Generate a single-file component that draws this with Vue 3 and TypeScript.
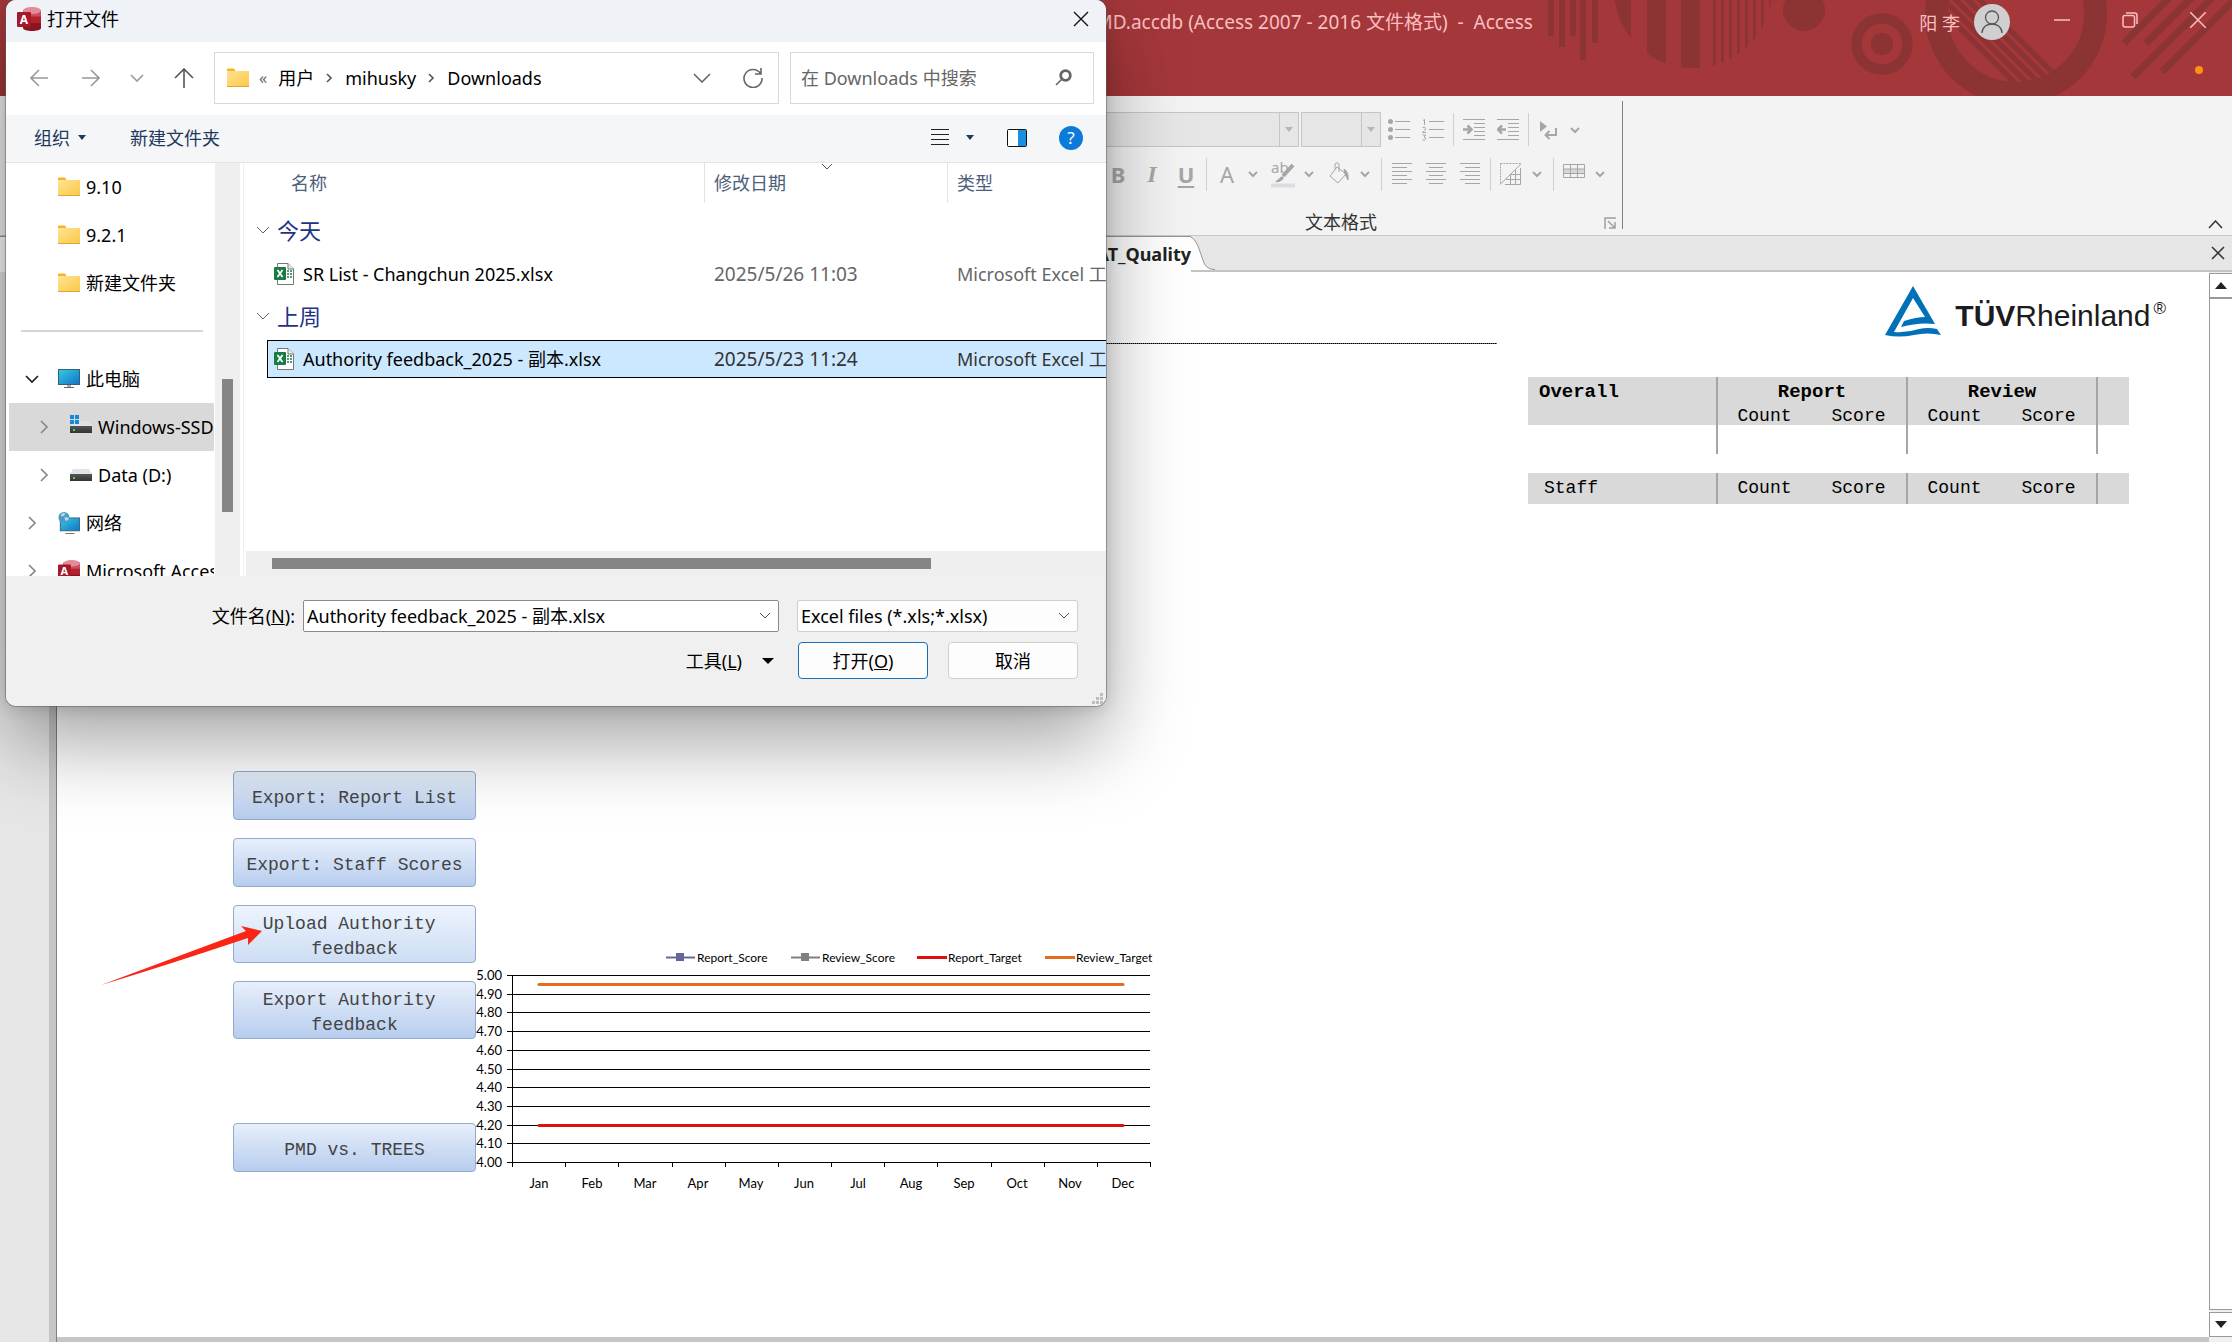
<script setup lang="ts">
interface FileRow { name: string; date: string; type: string; selected: boolean }
interface Group { title: string; rows: FileRow[] }

const groups: Group[] = [
  { title: '今天', rows: [{ name: 'SR List - Changchun 2025.xlsx', date: '2025/5/26 11:03', type: 'Microsoft Excel 工作表', selected: false }] },
  { title: '上周', rows: [{ name: 'Authority feedback_2025 - 副本.xlsx', date: '2025/5/23 11:24', type: 'Microsoft Excel 工作表', selected: true }] },
]

interface TreeItem { label: string; icon: string; arrow: '' | 'right' | 'down'; nested: boolean; active: boolean }
const folders: TreeItem[] = ['9.10', '9.2.1', '新建文件夹'].map((label) => ({ label, icon: 'folder', arrow: '', nested: false, active: false }))
const places: TreeItem[] = [
  { label: '此电脑', icon: 'pc', arrow: 'down', nested: false, active: false },
  { label: 'Windows-SSD (C:)', icon: 'windrive', arrow: 'right', nested: true, active: true },
  { label: 'Data (D:)', icon: 'drive', arrow: 'right', nested: true, active: false },
  { label: '网络', icon: 'network', arrow: 'right', nested: false, active: false },
  { label: 'Microsoft Access', icon: 'access', arrow: 'right', nested: false, active: false },
]

const months = ['Jan', 'Feb', 'Mar', 'Apr', 'May', 'Jun', 'Jul', 'Aug', 'Sep', 'Oct', 'Nov', 'Dec']
const plot = { left: 36, right: 674, top: 31, bottom: 218 }
const step = (plot.right - plot.left) / months.length
const monthX = (i: number) => Math.round(plot.left + step * (i + 0.5))
const tickX = (i: number) => Math.round(plot.left + step * i) + 0.5
const valueY = (v: number) => Math.round(plot.bottom - ((v - 4) / 1) * (plot.bottom - plot.top))
const levels = Array.from({ length: 11 }, (_, i) => 5 - i / 10)
const legend = [
  { label: 'Report_Score', x: 190, color: '#666699', marker: true },
  { label: 'Review_Score', x: 315, color: '#808080', marker: true },
  { label: 'Report_Target', x: 441, color: '#dd0f12', marker: false },
  { label: 'Review_Target', x: 569, color: '#e46c1e', marker: false },
]
const series = [
  { value: 4.95, color: '#e46c1e' },
  { value: 4.2, color: '#dd0f12' },
]
const stripes = [1713, 1721, 1729, 1737, 1745, 1753, 1761, 1769]
const alignments = [
  { name: '左对齐', x: [0, 0, 0, 0, 0, 0] },
  { name: '居中', x: [0, 3, 0, 3, 0, 3] },
  { name: '右对齐', x: [0, 5, 0, 5, 0, 5] },
]
</script>

<template>
  <div class="app">
    <header class="titlebar">
      <svg class="pattern" width="692" height="96" viewBox="1540 0 692 96" aria-hidden="true">
        <defs>
          <clipPath id="disc"><circle cx="1693" cy="-11" r="79" /></clipPath>
          <clipPath id="hole"><circle cx="2016" cy="14" r="70" /></clipPath>
        </defs>
        <g fill="#8c3334">
          <path d="M1548 0h6v36h-6zM1559 0h6v47h-6zM1570 0h6v36h-6zM1580 0h6v60h-6zM1592 0h6v43h-6z" />
          <g clip-path="url(#disc)">
            <path d="M1612 0h19v96h-19zM1647 0h19v96h-19zM1681 0h19v96h-19z" />
            <rect v-for="x in stripes" :key="x" :x="x" y="0" width="3" height="96" />
          </g>
          <circle cx="1804" cy="10" r="21" />
          <circle cx="1882" cy="44" r="11" />
        </g>
        <circle cx="1882" cy="44" r="25.500" fill="none" stroke="#8c3334" stroke-width="10.500" />
        <circle cx="2016" cy="14" r="79.500" fill="none" stroke="#8c3334" stroke-width="23" />
        <g clip-path="url(#hole)" stroke="#8c3334" stroke-width="5">
          <path d="M1930 -2L2020 88M1942 -2L2032 88M1954 -2L2044 88M1966 -2L2056 88M1978 -2L2068 88" />
        </g>
        <path d="M2124 43L2171 -4M2146 43L2193 -4M2133 77L2216 -6M2162 72L2240 -6" stroke="#8c3334" stroke-width="7" />
      </svg>
      <div class="caption">PMD.accdb (Access 2007 - 2016 文件格式)&nbsp; -&nbsp; Access</div>
      <div class="account">
        <span>阳 李</span>
        <svg width="36" height="36" viewBox="0 0 36 36"><circle cx="18" cy="18" r="18" fill="#d0cfcf" /><g fill="none" stroke="#555" stroke-width="1.300"><circle cx="18" cy="13.500" r="6.500" /><path d="M8 29c0-12 20-12 20 0" /></g></svg>
      </div>
      <button class="win" aria-label="最小化"><svg width="16" height="16" viewBox="0 0 16 16"><path d="M0 8h16" /></svg></button>
      <button class="win" aria-label="还原"><svg width="16" height="16" viewBox="0 0 16 16"><rect x="1" y="3.500" width="11.500" height="11.500" rx="2" /><path d="M4 1h8.500q2.500 0 2.500 2.500V12" /></svg></button>
      <button class="win" aria-label="关闭"><svg width="16" height="16" viewBox="0 0 16 16"><path d="M0 0l16 16M16 0L0 16" /></svg></button>
      <i class="notice"></i>
    </header>

    <section class="ribbon">
      <div class="group">
        <div class="tools first">
          <div class="combo wide"><select disabled aria-label="字体"><option></option></select><span><svg width="8" height="5"><path d="M0 0h8L4 5z" fill="#b5b5b5" /></svg></span></div>
          <div class="combo"><select disabled aria-label="字号"><option></option></select><span><svg width="8" height="5"><path d="M0 0h8L4 5z" fill="#b5b5b5" /></svg></span></div>
          <button class="tool" aria-label="项目符号"><svg width="22" height="22" viewBox="0 0 22 22"><g fill="#a6a6a6" stroke="none"><circle cx="2.500" cy="2.500" r="2.500" /><circle cx="2.500" cy="10.500" r="2.500" /><circle cx="2.500" cy="18.500" r="2.500" /></g><path d="M7 2.500h15M7 10.500h15M7 18.500h15" /></svg></button>
          <button class="tool" aria-label="编号"><svg width="22" height="22" viewBox="0 0 22 22"><path d="M1 1.500L2.500 .5V6M.5 8.500q3-1 3 .8Q3.500 11 .5 13.500h3.500M.5 16h3.200l-1.700 2q2 .2 1.700 2-.8 1.800-3.200 1M7 2.500h15M7 10.500h15M7 18.500h15" /></svg></button>
          <i class="sep"></i>
          <button class="tool" aria-label="增加缩进"><svg width="22" height="22" viewBox="0 0 22 22"><path d="M0 .5h22M11 4.500h11M11 8.500h11M11 12.500h11M11 16.500h11M0 20.500h22" /><path d="M0 10.500h8M4.500 6.500l4 4-4 4" stroke-width="2.500" /></svg></button>
          <button class="tool" aria-label="减少缩进"><svg width="22" height="22" viewBox="0 0 22 22"><path d="M0 .5h22M11 4.500h11M11 8.500h11M11 12.500h11M11 16.500h11M0 20.500h22" /><path d="M1 10.500h8M5 6.500l-4 4 4 4" stroke-width="2.500" /></svg></button>
          <i class="sep"></i>
          <button class="tool split" aria-label="文字方向"><svg width="34" height="22" viewBox="0 0 34 22"><path d="M8 2l7 5.500L8 13z" fill="#a6a6a6" stroke="none" /><path d="M24 9v7H14M17.500 12L13.500 16l4 4" stroke-width="2" /></svg><svg class="chev" width="18" height="10"><path d="M5 3l4 4 4-4" /></svg></button>
        </div>
        <div class="tools second">
          <button class="tool letter"><b>B</b></button>
          <button class="tool letter"><b class="it">I</b></button>
          <button class="tool letter"><b class="un">U</b></button>
          <i class="sep"></i>
          <button class="tool split letter"><span>A</span><svg class="chev" width="18" height="10"><path d="M5 3l4 4 4-4" /></svg></button>
          <button class="tool split" aria-label="突出显示"><svg width="34" height="28" viewBox="0 0 34 28"><text x="5" y="13" font-size="15" fill="#a6a6a6" stroke="none">ab</text><path d="M27 5L17 16" stroke-width="4" /><path d="M9 22l7-6 2 2q-3 5-9 4z" fill="#a6a6a6" stroke="none" /><path d="M5 25.500h24" stroke="#dfdbe2" stroke-width="4" /></svg><svg class="chev" width="18" height="10"><path d="M5 3l4 4 4-4" /></svg></button>
          <button class="tool split" aria-label="填充"><svg width="34" height="26" viewBox="0 0 34 26"><path d="M15 6l9 7-8 9-8-7zM13 8V3q2.500-3 4 0v8" /><path d="M22 8q5 3 4 11l-3-6z" fill="#a6a6a6" /></svg><svg class="chev" width="18" height="10"><path d="M5 3l4 4 4-4" /></svg></button>
          <i class="sep"></i>
          <button v-for="a in alignments" :key="a.name" class="tool" :aria-label="a.name">
            <svg width="20" height="22" viewBox="0 0 20 22"><path v-for="(x, i) in a.x" :key="i" :d="`M${x} ${i * 4 + 0.5}h${i % 2 ? (a.name === '居中' ? 14 : 15) : 20}`" /></svg>
          </button>
          <i class="sep"></i>
          <button class="tool split" aria-label="网格线"><svg width="34" height="22" viewBox="0 0 34 22"><path d="M6.500 .5h21M6.500 .5v21" stroke-dasharray="2 1" /><path d="M6 21.500L27 1M26.500 5v16.500H11M21.500 6v15M16.500 11v10M16 11.500h11M12 16.500h15" /></svg><svg class="chev" width="18" height="10"><path d="M5 3l4 4 4-4" /></svg></button>
          <i class="sep"></i>
          <button class="tool split" aria-label="可选行颜色"><svg width="34" height="22" viewBox="0 0 34 22"><path d="M6 6h22v4H6z" fill="#dcd4dc" stroke="none" /><path d="M6.500 1.500h21v13h-21zM6 6h22M6 10.500h22M13.500 1v13M20.500 1v13" /></svg><svg class="chev" width="18" height="10"><path d="M5 3l4 4 4-4" /></svg></button>
        </div>
        <div class="group-name">
          <span>文本格式</span>
          <button aria-label="更多格式选项"><svg width="12" height="12" viewBox="0 0 12 12"><path d="M1 12V1h11M4 4l6 6M11 5v6H5" fill="none" stroke="#a0a0a0" stroke-width="1.500" /></svg></button>
        </div>
      </div>
      <button class="collapse" aria-label="折叠功能区"><svg width="15" height="9" viewBox="0 0 15 9"><path d="M1 8l6.500-7L14 8" fill="none" stroke="#333" stroke-width="1.500" /></svg></button>
    </section>

    <nav class="tabs">
      <a class="tab" href="#quality">AT_Quality</a>
      <svg class="slope" width="24" height="34" viewBox="0 0 24 34"><path d="M0 34V1Q4 3 7 10L13 27Q16 33.500 23 33.500V34z" fill="#fff" /><path d="M0 1Q4 3 7 10L13 27Q16 33.500 24 33.500" fill="none" stroke="#969696" /></svg>
      <button aria-label="关闭选项卡"><svg width="14" height="14" viewBox="0 0 14 14"><path d="M1 1l12 12M13 1L1 13" fill="none" stroke="#333" stroke-width="1.500" /></svg></button>
    </nav>

    <div class="workspace">
      <aside class="navpane"></aside>
      <main class="form">
        <div class="form-left">
          <hr />
          <div class="lower">
            <div class="actions">
              <button class="act one">Export: Report List</button>
              <button class="act one">Export: Staff Scores</button>
              <button class="act light">Upload Authority&nbsp;<br />feedback</button>
              <button class="act">Export Authority&nbsp;<br />feedback</button>
              <button class="act one last">PMD vs. TREES</button>
            </div>
            <svg class="chart" width="684" height="254" viewBox="0 0 684 254" role="img" aria-label="Scores">
              <g v-for="l in legend" :key="l.label">
                <path :d="`M${l.x} 13.5h${l.marker ? 29 : 30}`" :stroke="l.color" :stroke-width="l.marker ? 2 : 3" />
                <rect v-if="l.marker" :x="l.x + 10" y="9" width="8" height="8" :fill="l.color" />
                <text :x="l.x + 31" y="18" class="legend">{{ l.label }}</text>
              </g>
              <g stroke="#000">
                <path v-for="v in levels" :key="v" :d="`M${plot.left - 5} ${valueY(v) + 0.5}H${plot.right}`" />
                <path :d="`M${plot.left + 0.5} ${plot.top}V${plot.bottom}`" />
                <path v-for="i in 13" :key="i" :d="`M${tickX(i - 1)} ${plot.bottom}v5`" />
              </g>
              <text v-for="v in levels" :key="v" x="26" :y="valueY(v) + 5" text-anchor="end">{{ v.toFixed(2) }}</text>
              <text v-for="(m, i) in months" :key="m" :x="monthX(i)" y="244" text-anchor="middle">{{ m }}</text>
              <path v-for="s in series" :key="s.value" :d="`M${monthX(0)} ${valueY(s.value) + 0.5}H${monthX(11)}`" :stroke="s.color" stroke-width="3" stroke-linecap="round" />
            </svg>
          </div>
        </div>
        <div class="form-right">
          <div class="logo">
            <svg width="56" height="51" viewBox="0 0 56 51"><path fill="#0071b9" fill-rule="evenodd" d="M28 0L50 38Q34 36 16 41L19 35Q32 31 40 31L28 12 9 46Q22 47 34 43 43 41 52 43L56 49Q42 46 29 49 14 52 0 49z" /></svg>
            <span><b>TÜV</b>Rheinland</span><sup>®</sup>
          </div>
          <table class="score overall">
            <colgroup><col class="c-name" /><col class="c-val" span="4" /><col /></colgroup>
            <thead>
              <tr><th class="first">Overall</th><th colspan="2" class="bar">Report</th><th colspan="2" class="bar">Review</th><th class="bar"></th></tr>
              <tr class="sub"><td></td><td class="bar">Count</td><td>Score</td><td class="bar">Count</td><td>Score</td><td class="bar"></td></tr>
            </thead>
            <tbody><tr class="blank"><td></td><td class="bar"></td><td></td><td class="bar"></td><td></td><td class="bar"></td></tr></tbody>
          </table>
          <table class="score staff">
            <colgroup><col class="c-name" /><col class="c-val" span="4" /><col /></colgroup>
            <thead><tr><td class="first">Staff</td><td class="bar">Count</td><td>Score</td><td class="bar">Count</td><td>Score</td><td class="bar"></td></tr></thead>
          </table>
        </div>
        <svg class="pointer" width="162" height="62" viewBox="0 0 162 62" aria-hidden="true"><path d="M0 60L145 6 140 1 161 6 147 20V13Q60 42 0 60z" fill="#fb2516" /></svg>
      </main>
      <div class="vscroll">
        <button aria-label="向上滚动"><svg width="12" height="7"><path d="M0 7h12L6 0z" fill="#222" /></svg></button>
        <div class="track"></div>
        <button class="down" aria-label="向下滚动"><svg width="12" height="7"><path d="M0 0h12L6 7z" fill="#222" /></svg></button>
      </div>
    </div>

    <svg class="defs" width="0" height="0" aria-hidden="true">
      <defs>
        <linearGradient id="gf" x1="0" y1="0" x2="1" y2="1"><stop offset="0" stop-color="#ffe396" /><stop offset="1" stop-color="#fcc846" /></linearGradient>
        <linearGradient id="gs" x1="0" y1="0" x2="1" y2="1"><stop offset="0" stop-color="#36cbe0" /><stop offset="1" stop-color="#1173c8" /></linearGradient>
        <linearGradient id="gd" x1="0" y1="0" x2="0" y2="1"><stop offset="0" stop-color="#555" /><stop offset="1" stop-color="#333" /></linearGradient>
      </defs>
      <symbol id="i-folder" viewBox="0 0 22 24"><path d="M0 3.500h7l2 2.500h-9z" fill="#eaa81c" /><path d="M0 3q0-.5.500-.5H7l1.500 2.500H22V19H0z" fill="#f5b520" /><path d="M0 5h22v15H0z" fill="url(#gf)" /><path d="M0 20.500h22" stroke="#dba53a" /></symbol>
      <symbol id="i-pc" viewBox="0 0 22 24"><rect x=".5" y="2.500" width="21" height="15" fill="url(#gs)" stroke="#35607c" /><path d="M9 18h4v2H9z" fill="#aaa" /><path d="M6 20.500h10" stroke="#666" /></symbol>
      <symbol id="i-drive" viewBox="0 0 22 24"><path d="M3 6h16l3 5H0z" fill="#e2e2e6" /><path d="M0 11h22v7H0z" fill="url(#gd)" /><path d="M3 14h2v2H3z" fill="#4fd44f" /></symbol>
      <symbol id="i-windrive" viewBox="0 0 22 24"><path d="M9 6h10l3 5H0z" fill="#e2e2e6" /><path d="M0 11h22v7H0z" fill="url(#gd)" /><path d="M3 14h2v2H3z" fill="#4fd44f" /><path d="M0 0h4v4H0zM5 0h4v4H5zM0 5h4v4H0zM5 5h4v4H5z" fill="#1588d8" /></symbol>
      <symbol id="i-network" viewBox="0 0 24 24"><rect x="2.500" y="6.500" width="21" height="14" fill="url(#gs)" stroke="#35607c" /><path d="M8 23.500h10" stroke="#666" /><circle cx="6.500" cy="6" r="6" fill="#4a9cc4" /><path d="M3 3q3-3 5-1-1 3-4 3zM7 6q4-1 5 1-2 4-4 2z" fill="#b9dcea" /></symbol>
      <symbol id="i-access" viewBox="0 0 24 24"><path d="M6 3v18c0 4 18 4 18 0V3z" fill="#8a1420" /><path d="M6 3v13h18V3z" fill="#b5202f" /><path d="M6 3v6.500h18V3z" fill="#c94f5f" /><ellipse cx="15" cy="3.500" rx="9" ry="3.500" fill="#e38a98" /><rect y="5" width="14" height="15" rx="1" fill="#a5182a" /><text x="7" y="16.500" font-size="12" font-weight="700" fill="#fff" text-anchor="middle">A</text></symbol>
      <symbol id="i-excel" viewBox="0 0 20 22"><path d="M3.500 .5H14L19.500 6v15.500h-16z" fill="#fff" stroke="#777" /><path d="M14 .5V6h5.500" fill="#eee" stroke="#777" /><path d="M13 8h2M16 8h2M13 11h2M16 11h2M13 14h2M16 14h2" stroke="#1d7f49" stroke-width="1.500" /><rect y="4" width="12" height="13" rx="1" fill="#187c44" /><path d="M3.500 7l5 7M8.500 7l-5 7" stroke="#fff" stroke-width="1.800" /></symbol>
    </svg>

    <section class="dialog" role="dialog" aria-label="打开文件">
      <div class="d-title">
        <svg width="24" height="24"><use href="#i-access" /></svg>
        <span>打开文件</span>
        <button aria-label="关闭"><svg width="16" height="16" viewBox="0 0 16 16"><path d="M1 1l14 14M15 1L1 15" fill="none" stroke="#111" stroke-width="1.400" /></svg></button>
      </div>
      <div class="d-nav">
        <button class="n1" aria-label="后退"><svg width="18" height="18" viewBox="0 0 18 18"><path d="M18 9H1M9 1L1 9l8 8" stroke="#999" /></svg></button>
        <button class="n1" aria-label="前进"><svg width="18" height="18" viewBox="0 0 18 18"><path d="M0 9h17M9 1l8 8-8 8" stroke="#999" /></svg></button>
        <button class="n2" aria-label="最近位置"><svg width="14" height="8" viewBox="0 0 14 8"><path d="M1 1l6 6 6-6" stroke="#999" /></svg></button>
        <button class="n3" aria-label="上移"><svg width="20" height="20" viewBox="0 0 20 20"><path d="M10 20V1M1 10l9-9 9 9" stroke="#555" /></svg></button>
        <div class="address">
          <svg width="22" height="24"><use href="#i-folder" /></svg>
          <span class="dim">«</span><a href="#users">用户</a>
          <svg class="crumb" width="7" height="10"><path d="M1 1l4 4-4 4" /></svg><a href="#mihusky">mihusky</a>
          <svg class="crumb" width="7" height="10"><path d="M1 1l4 4-4 4" /></svg><a href="#downloads">Downloads</a>
          <button class="drop" aria-label="展开地址"><svg width="18" height="10" viewBox="0 0 18 10"><path d="M1 1l8 8 8-8" stroke="#666" /></svg></button>
          <button aria-label="刷新"><svg width="20" height="20" viewBox="0 0 20 20"><path d="M17.500 5.500A9 9 0 1 0 19 10M18 0v6h-6" stroke="#666" /></svg></button>
        </div>
        <div class="search">
          <input type="text" placeholder="在 Downloads 中搜索" aria-label="搜索" />
          <svg width="17" height="17" viewBox="0 0 17 17"><circle cx="10.500" cy="6.500" r="4.800" fill="none" stroke="#666" stroke-width="2.800" /><path d="M7 10l-6 6" stroke="#666" stroke-width="2.800" /></svg>
        </div>
      </div>
      <div class="d-tools">
        <button>组织<svg width="8" height="5"><path d="M0 0h8L4 5z" fill="#1e395b" /></svg></button>
        <button class="new">新建文件夹</button>
        <button class="view" aria-label="视图"><svg width="18" height="17" viewBox="0 0 18 17"><path d="M0 .5h18M0 5.500h18M0 10.500h18M0 15.500h18" stroke="#222" /></svg><svg width="8" height="5"><path d="M0 0h8L4 5z" fill="#1e395b" /></svg></button>
        <button class="pane" aria-label="预览窗格"><svg width="20" height="18" viewBox="0 0 20 18"><path d="M1 1h18v16H1z" fill="#fff" /><path d="M11 1h8v16h-8z" fill="#1a8fe0" /><rect x=".5" y=".5" width="19" height="17" rx="1" fill="none" stroke="#111" /></svg></button>
        <button class="help" aria-label="帮助">?</button>
      </div>
      <div class="d-body">
        <div class="tree">
          <a v-for="t in folders" :key="t.label" class="node" href="#folder"><i class="arrow"></i><svg width="22" height="24"><use :href="`#i-${t.icon}`" /></svg><span>{{ t.label }}</span></a>
          <div class="rule"></div>
          <a v-for="t in places" :key="t.label" class="node" :class="{ nested: t.nested, active: t.active }" href="#place">
            <i class="arrow">
              <svg v-if="t.arrow === 'down'" width="14" height="8" viewBox="0 0 14 8"><path d="M1 1l6 6 6-6" stroke="#222" /></svg>
              <svg v-else width="8" height="14" viewBox="0 0 8 14"><path d="M1 1l6 6-6 6" stroke="#888" /></svg>
            </i>
            <svg width="22" height="24"><use :href="`#i-${t.icon}`" /></svg><span>{{ t.label }}</span>
          </a>
        </div>
        <div class="tree-scroll"><i></i></div>
        <div class="files">
          <table>
            <colgroup><col class="f0" /><col class="f1" /><col class="f2" /><col /></colgroup>
            <thead><tr><th></th><th class="name">名称</th><th class="line"><svg class="sort" width="12" height="7" viewBox="0 0 12 7"><path d="M1 1l5 5 5-5" fill="none" stroke="#555" /></svg>修改日期</th><th class="line">类型</th></tr></thead>
            <tbody v-for="g in groups" :key="g.title">
              <tr class="grp"><td colspan="4"><svg width="14" height="8" viewBox="0 0 14 8"><path d="M1 1l6 6 6-6" fill="none" stroke="#666" /></svg>{{ g.title }}</td></tr>
              <tr v-for="r in g.rows" :key="r.name" class="file" :class="{ selected: r.selected }">
                <td class="pad"></td>
                <td class="fname"><svg width="20" height="22"><use href="#i-excel" /></svg>{{ r.name }}</td><td class="date">{{ r.date }}</td><td>{{ r.type }}</td>
              </tr>
            </tbody>
          </table>
          <div class="files-scroll"><i></i></div>
        </div>
      </div>
      <div class="d-foot">
        <div class="line1">
          <label for="fname">文件名(<u>N</u>):</label>
          <div class="box dark"><input id="fname" type="text" value="Authority feedback_2025 - 副本.xlsx" /><svg width="12" height="8" viewBox="0 0 12 8"><path d="M1 1l5 5 5-5" fill="none" stroke="#555" /></svg></div>
          <div class="box filter"><select aria-label="文件类型"><option>Excel files (*.xls;*.xlsx)</option></select><svg width="12" height="8" viewBox="0 0 12 8"><path d="M1 1l5 5 5-5" fill="none" stroke="#555" /></svg></div>
        </div>
        <div class="line2">
          <button class="tl"><span>工具(<u>L</u>)</span><svg width="12" height="6"><path d="M0 0h12L6 6z" /></svg></button>
          <button class="btn primary"><span>打开(<u>O</u>)</span></button>
          <button class="btn">取消</button>
        </div>
        <svg class="grip" width="11" height="11" viewBox="0 0 11 11"><path d="M8 0h3v3H8zM8 4h3v3H8zM4 4h3v3H4zM8 8h3v3H8zM4 8h3v3H4zM0 8h3v3H0z" fill="#bdbdbd" /></svg>
      </div>
    </section>
  </div>
</template>

<style>
body { margin: 0; }
</style>

<style scoped>
.app { position: relative; display: flex; flex-direction: column; min-height: 100vh; overflow: hidden; background: #fff; color: #000; font: 18px/24px "Noto Sans", "Noto Sans CJK SC", sans-serif; }
.app * { box-sizing: border-box; }
button { padding: 0; border: 0; background: none; color: inherit; font: inherit; }
input, select { min-width: 0; padding: 0; border: 0; outline: 0; background: none; color: inherit; font: inherit; appearance: none; opacity: 1; }
a { color: inherit; text-decoration: none; }
svg { flex: none; display: block; }
.defs { position: absolute; }

.titlebar { position: relative; display: flex; align-items: flex-start; height: 96px; padding-left: 1084px; background: #a4373a; color: #fbbfc1; }
.pattern { position: absolute; top: 0; right: 0; }
.caption, .account, .win { position: relative; }
.caption { flex: 1; padding-top: 10px; font-size: 19px; white-space: pre; }
.account { display: flex; gap: 14px; margin: 4px 18px 0 0; }
.account span { padding-top: 7px; white-space: pre; }
.win { width: 68px; height: 40px; display: grid; place-items: center; }
.win path, .win rect { fill: none; stroke: #fbbfc1; stroke-width: 1.500; }
.notice { position: absolute; right: 29px; top: 66px; width: 8px; height: 8px; border-radius: 50%; background: #ff9110; }

.ribbon { display: flex; align-items: flex-end; justify-content: space-between; height: 140px; padding: 5px 9px 6px 0; background: #f3f3f3; border-bottom: 1px solid #c8c8c8; }
.group { height: 128px; width: 1623px; padding-left: 1060px; border-right: 1px solid #808080; }
.tools { display: flex; align-items: center; }
.first { height: 35px; margin-top: 11px; }
.second { height: 34px; margin: 10px 0 0 41px; }
.combo { display: flex; width: 80px; height: 35px; margin-right: 1px; border: 1px solid #c6c6c6; background: #e6e6e6; }
.combo.wide { width: 239px; margin-right: 2px; }
.combo select { flex: 1; }
.combo span { display: grid; place-items: center; width: 19px; border-left: 1px solid #c6c6c6; }
.tool { display: grid; place-items: center; width: 34px; height: 34px; color: #a6a6a6; }
.tool.split { display: flex; align-items: center; width: 56px; }
.tool svg { fill: none; stroke: #a6a6a6; }
.tool .chev { stroke-width: 2; }
.letter { font-size: 22px; }
.letter span { width: 34px; text-align: center; }
.it { font-family: "Liberation Serif", serif; font-style: italic; font-size: 24px; }
.un { text-decoration: underline; text-underline-offset: 3px; }
.sep { width: 1px; height: 33px; margin: 0 3px; background: #cfcfcf; }
.group-name { display: flex; align-items: center; justify-content: center; position: relative; height: 24px; margin-top: 19px; color: #333; }
.group-name button { position: absolute; right: 6px; bottom: 5px; }

.tabs { display: flex; align-items: center; height: 36px; background: #e6e6e6; border-bottom: 2px solid #c3c3c3; padding-right: 7px; }
.tab { height: 36px; width: 1191px; padding-top: 5px; margin-bottom: -2px; border-top: 1px solid #969696; background: #fff; color: #222; font-weight: 700; text-align: right; }
.slope { margin-right: auto; }

.workspace { flex: 1; display: flex; }
.navpane { width: 57px; background: #e6e6e6; border-right: 1px solid #808080; box-shadow: inset -7px 0 #c6c6c6; }
.form { position: relative; flex: 1; display: flex; border-bottom: 5px solid #c6c6c8; }
.form-left { flex: 1; }
hr { height: 1px; width: calc(100% - 31px); margin: 71px 0 0; border: 0; background: repeating-linear-gradient(90deg, #000 0 1px, #666 1px 2px); }
.lower { display: flex; margin: 427px 0 0 176px; }
.actions { display: flex; flex-direction: column; gap: 18px; width: 243px; }
.act { height: 58px; padding-top: 5px; border: 1px solid #93aacb; border-radius: 4px; background: linear-gradient(#e7effb, #b7cdee); color: #444; font: 18px/25px "Liberation Mono", monospace; }
.act.one { height: 49px; }
.act.light { background: linear-gradient(#edf4fd, #cdddf4); }
.act.last { margin-top: 66px; }
.chart { margin-top: 173px; font: 13px Lato, sans-serif; }
.legend { font-size: 12px; }

.form-right { width: 681px; }
.logo { display: flex; align-items: center; justify-content: flex-end; height: 51px; margin: 14px 43px 40px 0; color: #1b1b20; font: 30px/34px "Liberation Sans", Arial, sans-serif; }
.logo span { margin: 8px 3px 0 14px; }
.logo sup { font-size: 17px; line-height: 20px; align-self: flex-start; margin-top: 13px; }
.score { width: 601px; table-layout: fixed; border-spacing: 0; font: 18px/23px "Liberation Mono", monospace; }
.score td, .score th { padding: 0; text-align: center; }
.score thead { background: #d9d9d9; }
.score th { height: 28px; padding-top: 2px; font-size: 19px; }
.score .sub td { height: 20px; padding-top: 2px; line-height: 18px; }
.c-name { width: 188px; }
.c-val { width: 95px; }
.score .bar { border-left: 2px solid #a6a6a6; }
.score .first { padding-left: 11px; text-align: left; }
.blank td { height: 29px; }
.staff { margin-top: 19px; }
.staff td { height: 31px; }
.score.staff .first { padding-left: 16px; }
.pointer { position: absolute; left: 44px; top: 653px; }

.vscroll { display: flex; flex-direction: column; width: 23px; padding-top: 1px; padding-bottom: 5px; background: #f0f0f0; }
.vscroll button { display: grid; place-items: center; height: 25px; border: 1px solid #999; border-right: 0; background: #fff; }
.vscroll .track { flex: 1; border: 1px solid #999; border-right: 0; background: #fff; }
.vscroll .down { margin-top: 2px; }

.dialog { position: absolute; left: 6px; top: 0; width: 1100px; overflow: hidden; border-radius: 10px; background: #fff; box-shadow: 0 0 0 1px rgba(90, 90, 90, 0.5), 0 36px 80px rgba(0, 0, 0, 0.36), 0 2px 16px rgba(0, 0, 0, 0.16); }
.d-title { display: flex; align-items: center; gap: 6px; height: 42px; padding: 0 17px 4px 11px; background: #eff3f8; }
.d-title button { margin-left: auto; }
.d-nav { display: flex; align-items: center; height: 73px; padding: 0 12px 2px 7px; }
.d-nav button { flex: none; display: grid; place-items: center; height: 40px; }
.d-nav path { fill: none; stroke-width: 1.600; }
.n1 { width: 52px; }
.n2 { width: 40px; }
.n3 { width: 54px; }
.address { display: flex; align-items: center; width: 565px; height: 52px; margin: 0 auto 0 3px; padding: 0 15px 0 12px; border: 1px solid #d9d9d9; }
.address .dim { margin: 0 11px 0 10px; color: #666; font-size: 16px; }
.address .crumb { margin: 0 12px; }
.crumb path { stroke: #555; }
.address .drop { margin: 0 32px 0 auto; }
.search { display: flex; align-items: center; width: 304px; height: 52px; padding: 0 21px 0 10px; border: 1px solid #d9d9d9; }
.search input { flex: 1; }
.search input::placeholder { color: #666; opacity: 1; }
.d-tools { display: flex; align-items: center; height: 48px; padding: 0 23px 2px 28px; background: #f5f6f8; border-bottom: 1px solid #e5e5e5; color: #1e395b; }
.d-tools button { display: flex; align-items: center; gap: 8px; }
.d-tools .new { margin: 0 auto 0 44px; }
.d-tools .view { gap: 17px; }
.pane { margin: 0 32px 0 33px; }
.d-tools .help { justify-content: center; width: 24px; height: 24px; border-radius: 50%; background: #0b7ad8; color: #fff; font-size: 17px; }
.d-body { display: flex; height: 413px; }
.tree { width: 208px; overflow: hidden; white-space: nowrap; }
.node { display: flex; align-items: center; gap: 6px; height: 48px; margin-left: 3px; padding-left: 15px; }
.node.nested { padding-left: 27px; }
.node.active { background: #d9d9d9; }
.node svg { overflow: visible; }
.node span { flex: none; }
.arrow { flex: none; display: grid; place-items: center; width: 16px; margin-right: 12px; }
.arrow path { fill: none; stroke-width: 1.700; }
.rule { height: 48px; padding: 23px 11px 0 15px; }
.rule::before { content: ""; display: block; height: 2px; background: #d5d5d5; }
.tree-scroll { width: 25px; margin-left: 1px; background: #efefef; }
.tree-scroll i { display: block; width: 11px; height: 133px; margin: 216px 0 0 7px; background: #858585; }
.files { display: flex; flex-direction: column; flex: 1; min-width: 0; margin-left: 3px; border-left: 1px solid #f0f0f0; padding-left: 2px; }
.files table { width: 100%; margin-top: -4px; table-layout: fixed; border-spacing: 0 4px; white-space: nowrap; }
.files td, .files th { padding: 0; overflow: hidden; text-align: left; font-weight: 400; }
.f0 { width: 21px; }
.f1 { width: 437px; }
.f2 { width: 243px; }
.files th { position: relative; height: 40px; color: #4c607a; }
.files th.name { padding-left: 24px; }
.files th.line { padding-left: 9px; border-left: 1px solid #e2e2e2; }
.sort { position: absolute; left: 116px; top: 0; }
.files .grp td { height: 39px; padding: 0 0 2px 10px; color: #1f3287; font-size: 22px; }
.grp svg { display: inline-block; margin: 0 7px 5px 0; }
.files tbody:nth-of-type(1) .grp td { height: 44px; padding-top: 4px; }
.files .file td { height: 38px; padding-left: 10px; color: #666; }
.files .file .fname { padding-left: 7px; color: #000; }
.files .file .date { font-size: 19px; }
.fname svg { display: inline-block; margin-right: 9px; vertical-align: -4px; }
.files .selected td { border: 1px solid #000; border-width: 1px 0; background: #cce8ff; color: #333; }
.files .selected td.pad { border: 0; background: none; }
.files .file.selected .fname { border-left-width: 1px; padding-left: 6px; }
.files-scroll { height: 25px; margin-top: auto; padding: 7px 0 0 26px; background: #efefef; }
.files-scroll i { display: block; width: 659px; height: 11px; background: #858585; }
.d-foot { position: relative; padding: 24px 28px 27px; background: #f0f0f0; }
.line1, .line2 { display: flex; align-items: center; justify-content: flex-end; }
.line1 label { margin-right: 8px; }
.box { display: flex; align-items: center; width: 281px; height: 32px; padding: 0 7px 0 3px; border: 1px solid #d0d0d0; border-radius: 2px; background: #fdfdfd; }
.box.dark { width: 476px; margin-right: 18px; border-color: #8a8a8a; background: #fff; }
.box input, .box select { flex: 1; }
.line2 { margin-top: 10px; gap: 20px; }
.tl { display: flex; align-items: center; gap: 20px; margin-right: 4px; }
.btn { width: 130px; height: 37px; border: 1px solid #d0d0d0; border-radius: 4px; background: #fdfdfd; }
.btn.primary { border-color: #1a6fb5; }
.grip { position: absolute; right: 3px; bottom: 2px; }
</style>
